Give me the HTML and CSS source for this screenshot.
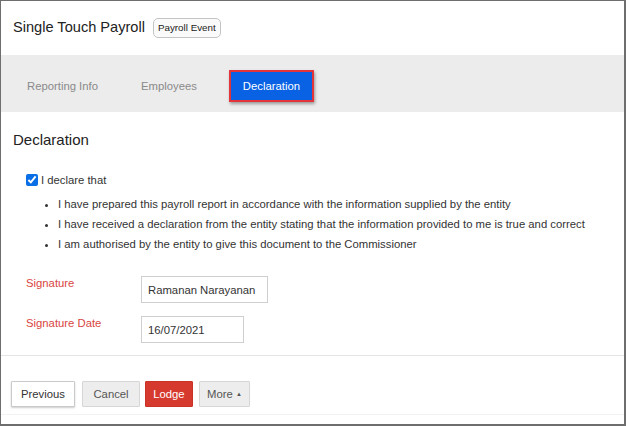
FILE: index.html
```html
<!DOCTYPE html>
<html>
<head>
<meta charset="utf-8">
<link rel="stylesheet" href="styles.css">
</head>
<body>
<div class="frame">
  <header class="header">
    <h1 class="title">Single Touch Payroll</h1>
    <span class="badge">Payroll Event</span>
  </header>
  <nav class="tabs">
    <span class="tab">Reporting Info</span>
    <span class="tab">Employees</span>
    <span class="tab tab-active">Declaration</span>
  </nav>
  <section class="content">
    <h2 class="section-title">Declaration</h2>
    <label class="check-row"><input class="check" type="checkbox" checked> I declare that</label>
    <ul class="decl-list">
      <li>I have prepared this payroll report in accordance with the information supplied by the entity</li>
      <li>I have received a declaration from the entity stating that the information provided to me is true and correct</li>
      <li>I am authorised by the entity to give this document to the Commissioner</li>
    </ul>
    <div class="form-row">
      <label class="field-label">Signature</label>
      <input class="field field-wide" type="text" value="Ramanan Narayanan">
    </div>
    <div class="form-row">
      <label class="field-label">Signature Date</label>
      <input class="field field-date" type="text" value="16/07/2021">
    </div>
  </section>
  <div class="divider"></div>
  <footer class="actions">
    <button class="btn btn-white">Previous</button>
    <button class="btn btn-gray btn-cancel">Cancel</button>
    <button class="btn btn-red">Lodge</button>
    <button class="btn btn-gray btn-more">More <span class="caret">▲</span></button>
  </footer>
</div>
</body>
</html>
```
FILE: styles.css
```css
html, body {
  margin: 0;
  padding: 0;
  background: #fff;
}
body {
  font-family: "Liberation Sans", Arial, sans-serif;
  color: #333;
}
.frame {
  box-sizing: border-box;
  width: 626px;
  height: 426px;
  border: 1px solid #6e6e6e;
  border-right-width: 2px;
  border-bottom-width: 2px;
  display: flex;
  flex-direction: column;
  overflow: hidden;
}
.header {
  height: 54px;
  display: flex;
  align-items: center;
  padding-left: 12px;
  gap: 8px;
}
.title {
  margin: 0;
  font-size: 14.6px;
  font-weight: normal;
  color: #222;
  line-height: 18px;
  position: relative;
  top: -1px;
}
.badge {
  box-sizing: border-box;
  height: 20px;
  padding: 0 4px;
  border: 1px solid #c4c4c4;
  border-radius: 5px;
  font-size: 9.8px;
  line-height: 18px;
  color: #222;
  background: #fafafa;
}
.tabs {
  height: 57px;
  box-sizing: border-box;
  background: #ececec;
  display: flex;
  align-items: center;
  gap: 17px;
  padding: 5px 0 0 13px;
}
.tab {
  height: 32px;
  box-sizing: border-box;
  padding: 0 13px;
  display: flex;
  align-items: center;
  font-size: 11.3px;
  color: #8a8a8a;
}
.tab-active {
  background: #0962e4;
  color: #fff;
  border: 2px solid #e3343c;
  padding: 0 12px;
  margin-left: 2px;
  box-shadow: 1px 2px 3px rgba(0,0,0,0.35);
}
.content {
  padding: 18px 12px 0 12px;
  font-size: 11.3px;
}
.section-title {
  margin: 0;
  font-size: 15px;
  font-weight: normal;
  color: #222;
  line-height: 20px;
}
.check-row {
  display: flex;
  align-items: center;
  margin: 20px 0 0 13px;
  height: 20px;
  gap: 3px;
}
.check {
  width: 12px;
  height: 12px;
  margin: 0;
  accent-color: #0a6fe6;
}
.decl-list {
  margin: 4px 0 0 0;
  padding-left: 45px;
}
.decl-list li {
  line-height: 20px;
}
.form-row {
  display: flex;
  align-items: flex-start;
  margin: 13px 0 0 13px;
}
.form-row:first-of-type {
  margin-top: 22px;
}
.field-label {
  width: 115px;
  line-height: 14px;
  color: #d9453f;
  font-size: 11.3px;
}
.field {
  box-sizing: border-box;
  height: 27px;
  border: 1px solid #cfcfcf;
  padding: 0 6px;
  font-family: "Liberation Sans", Arial, sans-serif;
  font-size: 11.3px;
  color: #333;
  outline: none;
}
.field-wide { width: 127px; }
.field-date { width: 103px; }
.divider {
  margin-top: 12px;
  height: 1px;
  background: #e4e4e4;
}
.actions {
  display: flex;
  gap: 6px;
  padding: 25px 0 7px 10px;
  border-bottom: 1px solid #f2f2f2;
}
.btn {
  height: 26px;
  box-sizing: border-box;
  padding: 0 10px;
  font-family: "Liberation Sans", Arial, sans-serif;
  font-size: 11.3px;
  border: 1px solid #d6d6d6;
  color: #444;
  border-radius: 1px;
}
.btn-white {
  background: #fff;
  border-color: #cacaca;
  box-shadow: 0 1px 2px rgba(0,0,0,0.2);
  padding: 0 9px;
  color: #333;
}
.btn-gray {
  background: #ededed;
  color: #555;
}
.btn-cancel {
  margin-left: 1px;
  padding: 0 10.5px;
}
.btn-red {
  background: #d63a2e;
  border-color: #c93226;
  color: #fff;
  padding: 0 7px;
  margin-left: -1px;
}
.btn-more {
  padding: 0 7.5px;
}
.caret {
  font-size: 6px;
  vertical-align: 2px;
}
```
